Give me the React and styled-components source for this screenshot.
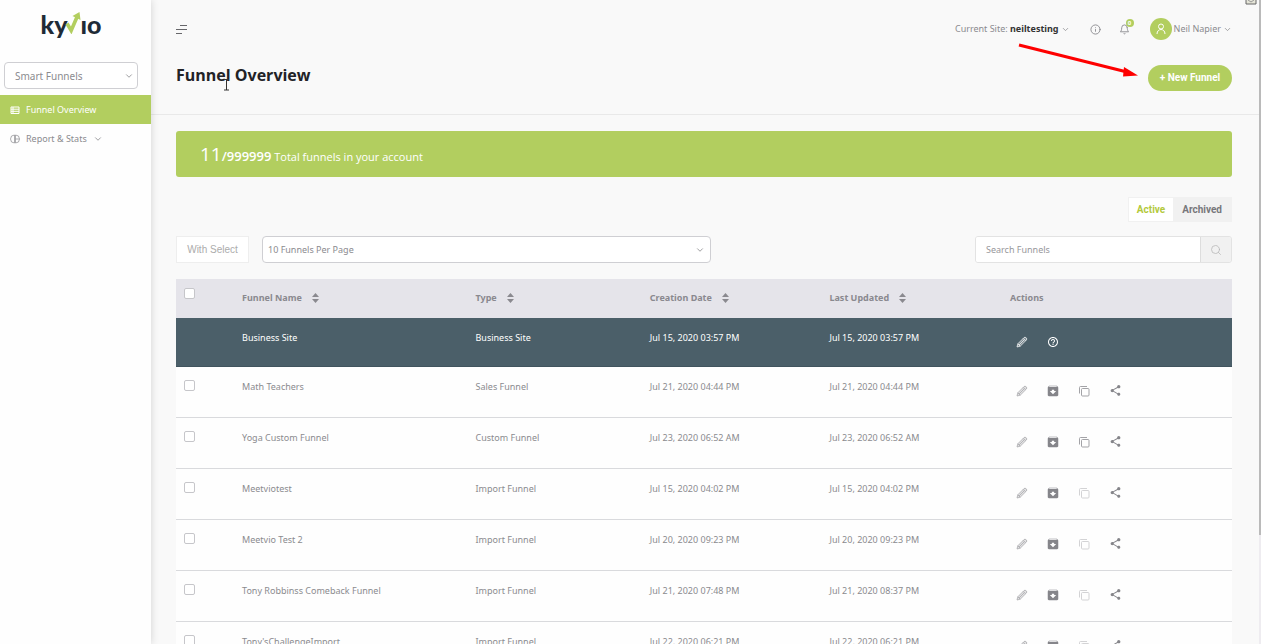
import React from "react";
import styled, { createGlobalStyle } from "styled-components";
import { FiBell, FiChevronDown, FiInfo, FiSearch } from "react-icons/fi";
import { MdArchive, MdShare, MdHelpOutline } from "react-icons/md";

const Global = createGlobalStyle`
  * { box-sizing: border-box; }
  html, body { margin: 0; }
  body {
    background: #f9f9f9;
    color: #8b8b8f;
    font: 9px/16px "Noto Sans", "Open Sans", sans-serif;
  }
  button, input, select { font: inherit; color: inherit; margin: 0; }
  button { border: 0; padding: 0; background: none; cursor: pointer; }
  a { color: inherit; text-decoration: none; }
  svg { display: block; flex: none; }
`;

const Page = styled.div`
  display: flex;
  height: 100vh;
  overflow: hidden;
  position: relative;
`;

const Sidebar = styled.aside`
  flex: 0 0 151px;
  background: #fefefe;
  box-shadow: 0 0 8px rgba(0, 0, 0, 0.16);
  z-index: 1;
`;

const Logo = styled.a`
  display: flex;
  align-items: flex-end;
  justify-content: center;
  height: 62px;
  padding: 0 9px 24px 0;
  color: #1e2b37;
  font: 900 25px/28px Lato, sans-serif;
  svg { margin: 0 -1px 4px -2px; }
`;

const SelectWrap = styled.div`
  position: relative;
  display: flex;
  ${(p) => (p.$grow ? "flex: 0 1 449px;" : "margin: 0 13px 6px 4px; font-size: 10px;")}
  svg {
    position: absolute;
    right: ${(p) => (p.$grow ? 6 : 4)}px;
    top: 9px;
    pointer-events: none;
  }
`;

const Select = styled.select`
  appearance: none;
  width: 100%;
  height: 27px;
  padding: 0 ${(p) => p.$inset}px;
  border: 1px solid #cfcfd3;
  border-radius: 4px;
  background: #fff;
`;

const NavItem = styled.a`
  display: flex;
  align-items: center;
  gap: 6px;
  height: 29px;
  padding-left: 10px;
  background: ${(p) => (p.$active ? "#b2ce5f" : "transparent")};
  color: ${(p) => (p.$active ? "#fff" : "#8b8b8f")};
`;

const Main = styled.main`
  flex: 1;
  min-width: 0;
`;

const Header = styled.header`
  height: 115px;
  padding: 18px 29px 0 25px;
  border-bottom: 1px solid #e9e9e9;
`;

const HeaderRow = styled.div`
  display: flex;
  align-items: flex-start;
  justify-content: space-between;
`;

const MenuButton = styled.button`
  padding-top: 6px;
`;

const UserBar = styled.div`
  display: flex;
  align-items: center;
  height: 22px;
`;

const BarButton = styled.button`
  position: relative;
  display: flex;
  align-items: center;
  gap: 2px;
  margin-left: ${(p) => p.$gap || 0}px;
  strong { color: #333; font-weight: 700; }
`;

const Badge = styled.span`
  position: absolute;
  top: -5px;
  right: -4px;
  width: 8px;
  height: 8px;
  border-radius: 50%;
  background: #b2ce5f;
  color: #fff;
  font: 700 6px/8px Roboto, sans-serif;
  text-align: center;
`;

const Avatar = styled.span`
  display: grid;
  place-items: center;
  width: 22px;
  height: 22px;
  border-radius: 50%;
  background: #b2ce5f;
`;

const Title = styled.h1`
  margin: 23px 0 0;
  color: #222226;
  font: 700 16px/24px "Open Sans", "Noto Sans", sans-serif;
`;

const NewButton = styled.button`
  height: 26px;
  width: 84px;
  margin-top: 25px;
  border-radius: 13px;
  background: #b2ce5f;
  color: #fff;
  font: 700 10px/26px Roboto, sans-serif;
`;

const Content = styled.section`
  padding: 16px 29px 0 25px;
`;

const Banner = styled.div`
  height: 46px;
  padding-left: 24px;
  border-radius: 3px;
  background: #b2ce5f;
  color: #fff;
  font: 11px/46px "Open Sans", "Noto Sans", sans-serif;
  big { font-size: 19px; }
  strong { font-size: 13px; font-weight: 600; }
`;

const Tabs = styled.div`
  display: flex;
  width: max-content;
  margin: 20px 0 14px auto;
  padding: 1px;
  background: #f1f1f1;
`;

const Tab = styled.button`
  height: 23px;
  padding: 0 ${(p) => (p.$active ? 8 : 9)}px;
  background: ${(p) => (p.$active ? "#fff" : "transparent")};
  color: ${(p) => (p.$active ? "#b3c93c" : "#77777b")};
  font: 700 10px/23px Roboto, sans-serif;
`;

const Toolbar = styled.div`
  display: flex;
  gap: 13px;
  margin-bottom: 16px;
`;

const BulkButton = styled.button`
  width: 73px;
  height: 27px;
  border: 1px solid #eee;
  background: #fff;
  color: #acacac;
  font: 10px/24px "Liberation Sans", Arial, sans-serif;
`;

const Search = styled.form`
  display: flex;
  width: 257px;
  height: 27px;
  margin-left: auto;
  border: 1px solid #e3e3e3;
  border-radius: 3px;
  overflow: hidden;
  input {
    flex: 1;
    min-width: 0;
    padding: 0 10px;
    border: 0;
    background: #fff;
    &::placeholder { color: #97979b; opacity: 1; }
  }
  button {
    display: grid;
    place-items: center;
    width: 31px;
    border-left: 1px solid #ddd;
    background: #f1f1f1;
    color: #b5b5b5;
  }
`;

const Table = styled.table`
  width: 100%;
  table-layout: fixed;
  border-collapse: collapse;
  th, td { padding: 0; text-align: left; vertical-align: top; white-space: nowrap; }
  th { height: 39px; padding-top: 11px; background: #e5e4ea; color: #8a898f; font-weight: 700; }
`;

const Row = styled.tr`
  height: ${(p) => (p.$dark ? 48 : 51)}px;
  background: ${(p) => (p.$dark ? "#4b5f69" : "#fefefe")};
  color: ${(p) => (p.$dark ? "#fff" : "#8b8b8f")};
  border-bottom: 1px solid ${(p) => (p.$dark ? "#41545e" : "#d9dadd")};
  td { padding-top: 12px; }
`;

const Sort = styled.button`
  display: flex;
  align-items: center;
  gap: 10px;
  font-weight: 700;
`;

const Check = styled.input`
  appearance: none;
  display: block;
  width: 11px;
  height: 11px;
  margin: ${(p) => (p.$head ? -2 : 1)}px 0 0 8px !important;
  border: 1px solid #c6c6ca;
  border-radius: 2px;
  background: #fff;
`;

const Actions = styled.div`
  display: flex;
  gap: 17px;
  padding: 5px 0 0 5px;
  color: ${(p) => (p.$dark ? "#fff" : "#85858a")};
`;

const IconButton = styled.button`
  display: grid;
  place-items: center;
  width: 14px;
  height: 14px;
  opacity: ${(p) => (p.$faded ? 0.35 : p.$soft ? 0.75 : 1)};
`;

const Pointer = styled.svg`
  position: absolute;
  top: 40px;
  right: 122px;
`;

const TextCursor = styled.svg`
  position: absolute;
  top: 79px;
  left: 223px;
`;

const Corner = styled.svg`
  position: absolute;
  top: 0;
  right: 4px;
`;

const ScrollTrack = styled.div`
  position: absolute;
  inset: 0 0 0 auto;
  width: 2px;
  background: #eeecf0;
  &::before {
    content: "";
    display: block;
    height: 83%;
    background: #bababa;
  }
`;

const Pencil = () => (
  <svg width="12" height="12" viewBox="0 0 12 12" fill="none" stroke="currentColor" strokeWidth="0.7">
    <path d="M1 11l.8-3.2L8 1.6Q9 .7 10.2 1.8 11.3 3 10.4 4L4.2 10.2z" fill="currentColor" fillOpacity="0.3" />
    <path d="M7.2 2.4l2.4 2.4M3 9l5.3-5.3M1.8 7.8l2.4 2.4" />
  </svg>
);

const Copy = () => (
  <svg width="12" height="12" viewBox="0 0 12 12" fill="none" stroke="currentColor">
    <rect x="3.5" y="3.5" width="7.500" height="7.500" rx="1" />
    <path d="M1.500 8.500V2.500q0-1 1-1h6.500" />
  </svg>
);

const SortArrows = () => (
  <svg width="7" height="10" viewBox="0 0 7 10" fill="currentColor">
    <path d="M0 4L3.500 0 7 4zM0 6h7L3.500 10z" />
  </svg>
);

const columns = ["Funnel Name", "Type", "Creation Date", "Last Updated"];
const widths = ["6.25%", "22.1%", "16.5%", "17%", "17.1%", "21%"];
const funnels = [
  ["Math Teachers", "Sales Funnel", "Jul 21, 2020 04:44 PM", "Jul 21, 2020 04:44 PM", true],
  ["Yoga Custom Funnel", "Custom Funnel", "Jul 23, 2020 06:52 AM", "Jul 23, 2020 06:52 AM", true],
  ["Meetviotest", "Import Funnel", "Jul 15, 2020 04:02 PM", "Jul 15, 2020 04:02 PM", false],
  ["Meetvio Test 2", "Import Funnel", "Jul 20, 2020 09:23 PM", "Jul 20, 2020 09:23 PM", false],
  ["Tony Robbinss Comeback Funnel", "Import Funnel", "Jul 21, 2020 07:48 PM", "Jul 21, 2020 08:37 PM", false],
  ["Tony'sChallengeImport", "Import Funnel", "Jul 22, 2020 06:21 PM", "Jul 22, 2020 06:21 PM", false],
];

export default function App() {
  return (
    <Page>
      <Global />
      <Sidebar>
        <Logo href="#" aria-label="kyvio">
          <span>ky</span>
          <svg width="16" height="22" viewBox="0 0 16 22" fill="none">
            <path d="M2 11.500l4.200 7L12 5" stroke="#b2ce5f" strokeWidth="3.600" />
            <path d="M7.500 4L14.500 0l1 8z" fill="#b2ce5f" />
          </svg>
          <span>ıo</span>
        </Logo>
        <SelectWrap>
          <Select $inset={10} aria-label="Product"><option>Smart Funnels</option></Select>
          <FiChevronDown size={10} />
        </SelectWrap>
        <nav>
          <NavItem href="#" $active>
            <svg width="10" height="10" viewBox="0 0 10 10" fill="none" stroke="currentColor">
              <path d="M1 2h8v6.500H1zM1 4.200h8M1 6.300h8M3 2v6" />
            </svg>
            Funnel Overview
          </NavItem>
          <NavItem href="#">
            <svg width="10" height="10" viewBox="0 0 10 10" fill="none" stroke="currentColor" strokeWidth="0.700">
              <path d="M4.500 1a4 4 0 1 0 0 8zM5.500 1v8a4 4 0 0 0 0-8zM5.500 5h4" />
            </svg>
            Report &amp; Stats
            <FiChevronDown size={10} />
          </NavItem>
        </nav>
      </Sidebar>

      <Main>
        <Header>
          <HeaderRow>
            <MenuButton aria-label="Toggle menu">
              <svg width="12" height="10" viewBox="0 0 12 10" stroke="#66666a">
                <path d="M4 1.500h7M0 5.500h11M0 9.500h6" />
              </svg>
            </MenuButton>
            <UserBar>
              <BarButton>
                <span>Current Site: <strong>neiltesting</strong></span>
                <FiChevronDown size={9} />
              </BarButton>
              <BarButton $gap={20} aria-label="Information"><FiInfo size={11} /></BarButton>
              <BarButton $gap={18} aria-label="Notifications">
                <FiBell size={11} />
                <Badge>0</Badge>
              </BarButton>
              <BarButton $gap={20}>
                <Avatar>
                  <svg width="10" height="12" viewBox="0 0 10 12" fill="none" stroke="#fff">
                    <circle cx="5" cy="3.500" r="2.500" />
                    <path d="M1 11c0-6 8-6 8 0" />
                  </svg>
                </Avatar>
                Neil Napier
                <FiChevronDown size={9} />
              </BarButton>
            </UserBar>
          </HeaderRow>
          <HeaderRow>
            <Title>Funnel Overview</Title>
            <NewButton>+ New Funnel</NewButton>
          </HeaderRow>
        </Header>

        <Content>
          <Banner><big>11</big><strong>/999999</strong> Total funnels in your account</Banner>
          <Tabs>
            <Tab $active>Active</Tab>
            <Tab>Archived</Tab>
          </Tabs>
          <Toolbar>
            <BulkButton>With Select</BulkButton>
            <SelectWrap $grow>
              <Select $inset={5} aria-label="Funnels per page"><option>10 Funnels Per Page</option></Select>
              <FiChevronDown size={10} />
            </SelectWrap>
            <Search>
              <input aria-label="Search Funnels" placeholder="Search Funnels" />
              <button type="button" aria-label="Search"><FiSearch size={12} strokeWidth={1.5} /></button>
            </Search>
          </Toolbar>
          <Table>
            <colgroup>{widths.map((w, i) => <col key={i} width={w} />)}</colgroup>
            <thead>
              <tr>
                <th><Check type="checkbox" $head aria-label="Select all funnels" /></th>
                {columns.map((c) => <th key={c}><Sort>{c}<SortArrows /></Sort></th>)}
                <th>Actions</th>
              </tr>
            </thead>
            <tbody>
              <Row $dark>
                <td />
                <td>Business Site</td>
                <td>Business Site</td>
                <td>Jul 15, 2020 03:57 PM</td>
                <td>Jul 15, 2020 03:57 PM</td>
                <td>
                  <Actions $dark>
                    <IconButton aria-label="Edit"><Pencil /></IconButton>
                    <IconButton aria-label="Help"><MdHelpOutline size={12} /></IconButton>
                  </Actions>
                </td>
              </Row>
              {funnels.map(([name, type, created, updated, copyable]) => (
                <Row key={name}>
                  <td><Check type="checkbox" aria-label={`Select ${name}`} /></td>
                  <td>{name}</td>
                  <td>{type}</td>
                  <td>{created}</td>
                  <td>{updated}</td>
                  <td>
                    <Actions>
                      <IconButton $soft aria-label="Edit"><Pencil /></IconButton>
                      <IconButton aria-label="Archive"><MdArchive size={14} /></IconButton>
                      <IconButton $soft aria-label="Duplicate" $faded={!copyable}><Copy /></IconButton>
                      <IconButton aria-label="Share"><MdShare size={13} /></IconButton>
                    </Actions>
                  </td>
                </Row>
              ))}
            </tbody>
          </Table>
        </Content>
      </Main>

      <Pointer width="122" height="38" viewBox="0 0 122 38">
        <path d="M2 5l108 27" stroke="#fe0000" strokeWidth="3" />
        <path d="M107 27l14 8.500-15 1z" fill="#fe0000" />
      </Pointer>
      <TextCursor width="7" height="12" viewBox="0 0 7 12" fill="none" stroke="#333">
        <path d="M1 .5h5M1 11h5M3.500 1v10" />
      </TextCursor>
      <ScrollTrack />
      <Corner width="12" height="5" viewBox="0 0 12 5">
        <path d="M1 0v4h10V0" fill="#e5e5d8" stroke="#666" />
        <path d="M3 0l3 2 3-2" fill="none" stroke="#999" />
      </Corner>
    </Page>
  );
}
